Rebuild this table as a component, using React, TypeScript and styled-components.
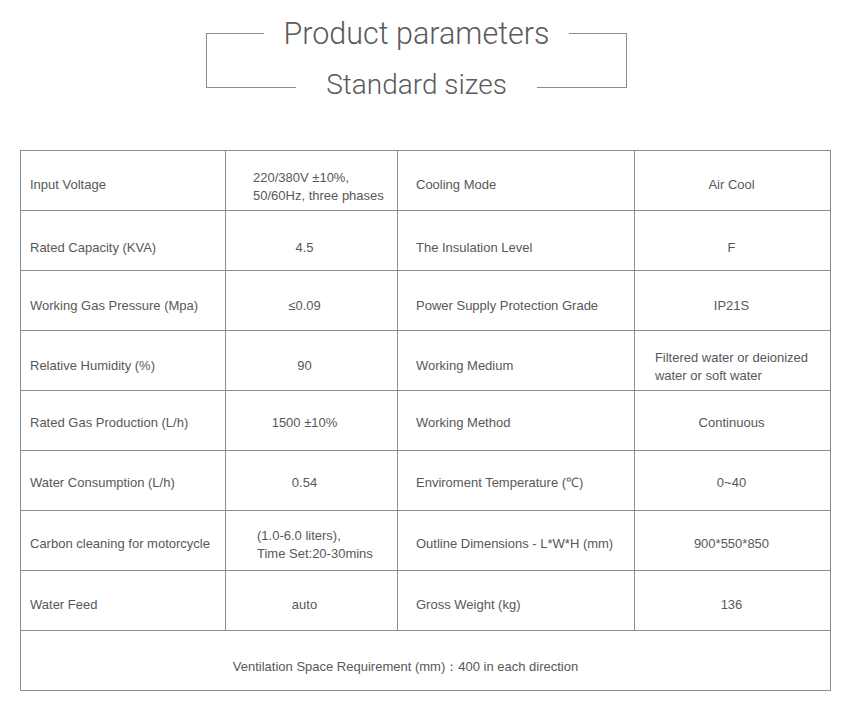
import React from "react";
import styled, { createGlobalStyle } from "styled-components";

const GlobalStyle = createGlobalStyle`
    html, body {
        margin: 0;
        padding: 0;
        background: #fff;
    }
    body {
        width: 850px;
        font-family: "Liberation Sans", Arial, sans-serif;
        color: #555;
    }
`;

const Page = styled.div`
    padding-top: 33px;
    padding-bottom: 18px;
`;

const Frame = styled.div`
    box-sizing: border-box;
    width: 421px;
    height: 55px;
    margin-left: 206px;
    border: 1px solid #8c8c8c;
    display: flex;
    flex-direction: column;
    justify-content: space-between;
    align-items: center;
`;

const Heading = styled.h1<{ $gap: number; $size: number; $bottom?: boolean }>`
    margin: ${({ $bottom }) => ($bottom ? "0 0 -15px 0" : "-17px 0 0 0")};
    padding: 0 ${({ $gap }) => $gap}px;
    background: #fff;
    font-family: Roboto, "Liberation Sans", sans-serif;
    font-weight: 300;
    font-size: ${({ $size }) => $size}px;
    line-height: 34px;
    color: #5a5a5a;
    white-space: nowrap;
`;

const Table = styled.table`
    margin: 62px 0 0 20px;
    width: 810px;
    border-collapse: collapse;
    table-layout: fixed;
    font-size: 13px;
    line-height: 18px;
    color: #585858;
`;

const Cell = styled.td<{ $align?: "left" | "center"; $pl?: number; $pr?: number; $pt?: number }>`
    height: 60px;
    box-sizing: border-box;
    border: 1px solid #8c8c8c;
    vertical-align: middle;
    text-align: ${({ $align }) => $align || "left"};
    padding: ${({ $pt }) => $pt ?? 4}px ${({ $pr }) => $pr ?? 0}px 0 ${({ $pl }) => $pl ?? 0}px;
`;

const Lines = styled.span`
    display: inline-block;
    text-align: left;
`;

interface IParam {
    label: string;
    value: string[];
    vx?: number;
    vt?: number;
}

interface IRow {
    left: IParam;
    right: IParam;
    pt?: number;
}

const rows: IRow[] = [
    {
        left: { label: "Input Voltage", value: ["220/380V ±10%,", "50/60Hz, three phases"], vx: 27, vt: 12 },
        right: { label: "Cooling Mode", value: ["Air Cool"] },
        pt: 8,
    },
    {
        left: { label: "Rated Capacity (KVA)", value: ["4.5"] },
        right: { label: "The Insulation Level", value: ["F"] },
        pt: 15,
    },
    {
        left: { label: "Working Gas Pressure (Mpa)", value: ["≤0.09"] },
        right: { label: "Power Supply Protection Grade", value: ["IP21S"] },
        pt: 11,
    },
    {
        left: { label: "Relative Humidity (%)", value: ["90"] },
        right: { label: "Working Medium", value: ["Filtered water or deionized", "water or soft water"], vt: 12 },
        pt: 10,
    },
    {
        left: { label: "Rated Gas Production (L/h)", value: ["1500 ±10%"] },
        right: { label: "Working Method", value: ["Continuous"] },
    },
    {
        left: { label: "Water Consumption (L/h)", value: ["0.54"] },
        right: { label: "Enviroment Temperature (℃)", value: ["0~40"] },
    },
    {
        left: { label: "Carbon cleaning for motorcycle", value: ["(1.0-6.0 liters),", "Time Set:20-30mins"], vx: 31, vt: 8 },
        right: { label: "Outline Dimensions - L*W*H (mm)", value: ["900*550*850"] },
        pt: 6,
    },
    {
        left: { label: "Water Feed", value: ["auto"] },
        right: { label: "Gross Weight (kg)", value: ["136"] },
        pt: 8,
    },
];

const Value: React.FC<{ lines: string[] }> = ({ lines }) =>
    lines.length > 1 ? (
        <Lines>
            {lines.map((l) => (
                <div key={l}>{l}</div>
            ))}
        </Lines>
    ) : (
        <>{lines[0]}</>
    );

function App() {
    return (
        <Page>
            <GlobalStyle />
            <Frame>
                <Heading $gap={20} $size={30.5}>Product parameters</Heading>
                <Heading $gap={30} $size={28} $bottom>Standard sizes</Heading>
            </Frame>
            <Table>
                <colgroup>
                    <col style={{ width: 205 }} />
                    <col style={{ width: 172 }} />
                    <col style={{ width: 237 }} />
                    <col style={{ width: 196 }} />
                </colgroup>
                <tbody>
                    {rows.map((r) => (
                        <tr key={r.left.label}>
                            <Cell $pl={9} $pt={r.pt}>{r.left.label}</Cell>
                            {r.left.vx ? (
                                <Cell $pl={r.left.vx} $pt={r.left.vt ?? r.pt}>
                                    <Value lines={r.left.value} />
                                </Cell>
                            ) : (
                                <Cell $align="center" $pr={14} $pt={r.pt}>
                                    <Value lines={r.left.value} />
                                </Cell>
                            )}
                            <Cell $pl={18} $pt={r.pt}>{r.right.label}</Cell>
                            <Cell $align="center" $pr={2} $pt={r.right.vt ?? r.pt}>
                                <Value lines={r.right.value} />
                            </Cell>
                        </tr>
                    ))}
                    <tr>
                        <Cell colSpan={4} $align="center" $pr={40} $pt={12}>
                            Ventilation Space Requirement (mm)：400 in each direction
                        </Cell>
                    </tr>
                </tbody>
            </Table>
        </Page>
    );
}

export default App;
